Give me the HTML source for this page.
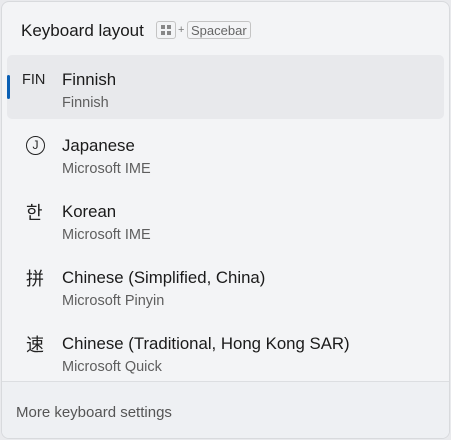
<!DOCTYPE html>
<html><head><style>
body{margin:0;width:451px;height:440px;background:#e9eaed;font-family:"Liberation Sans","Noto Sans CJK SC",sans-serif;overflow:hidden}
.p{position:absolute;left:1px;top:1px;width:447px;height:436px;background:#f3f4f6;border:1px solid #d8dadd;border-radius:8px;overflow:hidden}
.h{position:absolute;left:19px;top:19px;font-size:17px;color:#1a1a1a}
.k{position:absolute;top:19px;height:18px;border:1px solid #c4c4c4;border-radius:3px;font-size:13px;color:#666;line-height:17px;box-sizing:border-box}
.row{position:absolute;left:5px;width:437px;height:64px;border-radius:5px}
.ic{position:absolute;left:15px;top:12px;font-size:18px;color:#222}
.t{position:absolute;left:55px;top:15px;font-size:16.8px;color:#1a1a1a}
.s{position:absolute;left:55px;top:40px;font-size:14.5px;color:#5e5e5e}
.f{position:absolute;left:0;top:379px;width:100%;height:60px;background:#eef0f3;border-top:1px solid #dcdee1}
</style></head><body><div class="p">
<div class="h">Keyboard layout</div>
<div class="k" style="left:154px;width:20px"><div style="position:absolute;left:4px;top:3px;width:10px;height:10px;background:linear-gradient(#888,#888) 0 0/4px 4px no-repeat,linear-gradient(#888,#888) 6px 0/4px 4px no-repeat,linear-gradient(#888,#888) 0 6px/4px 4px no-repeat,linear-gradient(#888,#888) 6px 6px/4px 4px no-repeat"></div></div>
<div style="position:absolute;left:176px;top:22px;font-size:11px;color:#777">+</div>
<div class="k" style="left:185px;padding:0 3px">Spacebar</div>
<div class="row" style="top:53px;background:#e8e9ec"><div style="position:absolute;left:0;top:20px;width:3px;height:24px;background:#0a5fb4;border-radius:2px"></div>
<div class="ic" style="font-size:14.5px;top:17px">FIN</div><div class="t">Finnish</div><div class="s">Finnish</div></div>
<div class="row" style="top:119px"><div class="ic" style="left:19px;top:15px;width:17px;height:17px;border:1.5px solid #222;border-radius:50%;font-size:12px;text-align:center;line-height:17px;box-sizing:content-box">J</div><div class="t">Japanese</div><div class="s">Microsoft IME</div></div>
<div class="row" style="top:185px"><div class="ic" style="left:19px">한</div><div class="t">Korean</div><div class="s">Microsoft IME</div></div>
<div class="row" style="top:251px"><div class="ic" style="left:19px">拼</div><div class="t">Chinese (Simplified, China)</div><div class="s">Microsoft Pinyin</div></div>
<div class="row" style="top:317px"><div class="ic" style="left:19px">速</div><div class="t">Chinese (Traditional, Hong Kong SAR)</div><div class="s">Microsoft Quick</div></div>
<div class="f"><div style="position:absolute;left:14px;top:22px;font-size:15px;color:#555">More keyboard settings</div></div>
</div></body></html>
